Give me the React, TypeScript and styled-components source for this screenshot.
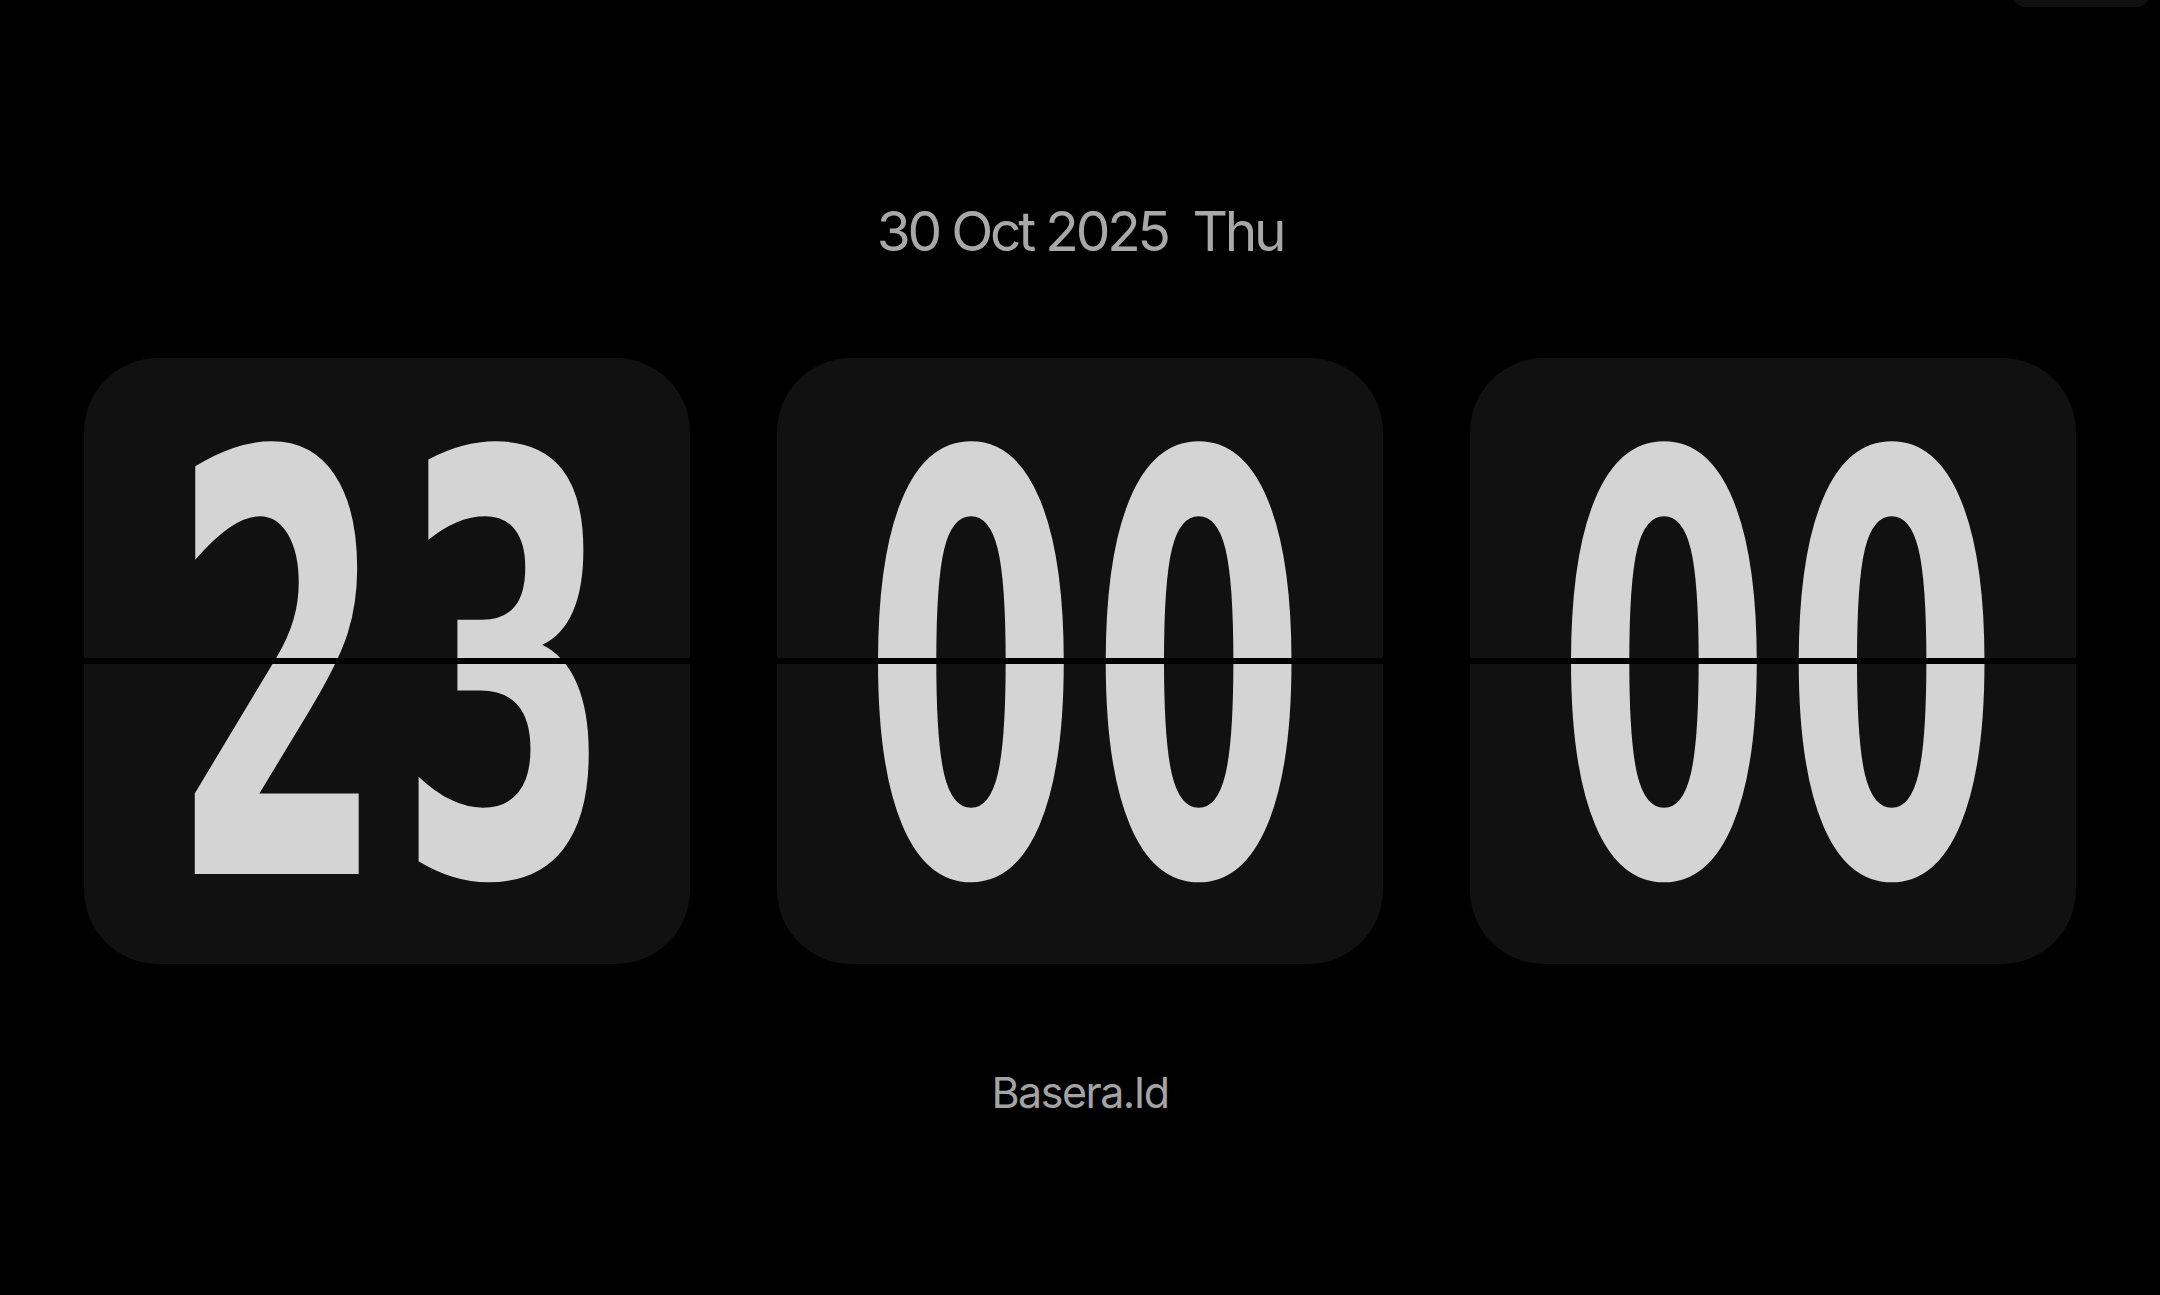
import React from "react";
import styled, { createGlobalStyle } from "styled-components";

const GlobalStyle = createGlobalStyle`
  html, body {
    margin: 0;
    padding: 0;
    background: #000;
  }
  body {
    font-family: Inter, "Noto Sans", sans-serif;
    -webkit-font-smoothing: antialiased;
  }
`;

const Screen = styled.main`
  position: relative;
  width: 100%;
  height: 1295px;
  overflow: hidden;
  background: #000;
  display: flex;
  flex-direction: column;
  align-items: center;
  padding-top: 204px;
  box-sizing: border-box;
`;

const CornerButton = styled.div`
  position: absolute;
  top: -40px;
  right: 10px;
  width: 138px;
  height: 47px;
  border-radius: 14px;
  background: #101010;
`;

const DateLine = styled.div`
  font-family: Inter, "Noto Sans", sans-serif;
  font-size: 55px;
  line-height: 1;
  color: #a8a8a8;
  white-space: pre;
  letter-spacing: -0.058em;
`;

const CardRow = styled.div`
  display: flex;
  justify-content: center;
  gap: 87px;
  margin-top: 99px;
`;

const FlipCard = styled.div`
  position: relative;
  width: 606px;
  height: 606px;
  border-radius: 74px;
  background: #111111;
  display: flex;
  align-items: center;
  justify-content: center;

  &::after {
    content: "";
    position: absolute;
    left: 0;
    right: 0;
    top: 300px;
    height: 6px;
    background: #000;
  }
`;

const Digits = styled.span`
  font-family: "DejaVu Sans Condensed", "DejaVu Sans", sans-serif;
  font-weight: 700;
  font-size: 583px;
  line-height: 1;
  color: #d4d4d4;
  letter-spacing: 21px;
  margin: 0 -104px 0 -83px;
  transform: translateY(11px) scaleX(0.59);
  display: inline-block;
  white-space: nowrap;
`;

const Brand = styled.div`
  margin-top: 107px;
  font-family: Inter, "Noto Sans", sans-serif;
  font-size: 43px;
  line-height: 1;
  color: #a3a3a3;
  letter-spacing: -0.035em;
`;

const App: React.FC = () => {
  const units = ["23", "00", "00"];

  return (
    <>
      <GlobalStyle />
      <Screen>
        <CornerButton />
        <DateLine>{"30 Oct 2025  Thu"}</DateLine>
        <CardRow>
          {units.map((value, index) => (
            <FlipCard key={index}>
              <Digits>{value}</Digits>
            </FlipCard>
          ))}
        </CardRow>
        <Brand>Basera.Id</Brand>
      </Screen>
    </>
  );
};

export default App;
